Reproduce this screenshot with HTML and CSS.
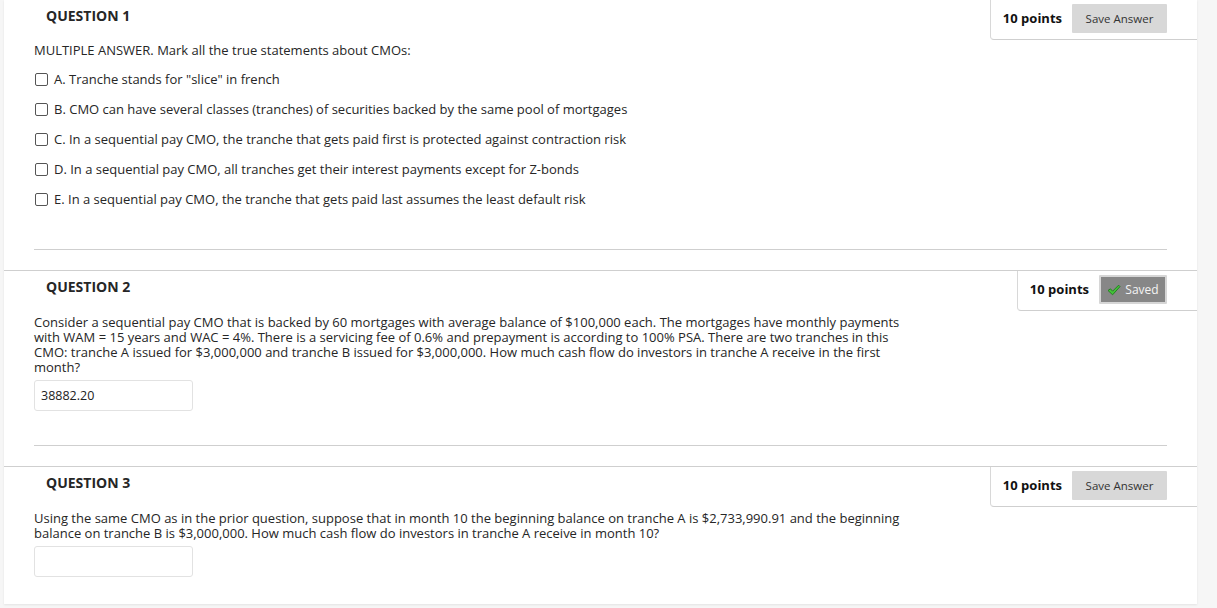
FILE: index.html
```html
<!DOCTYPE html>
<html>
<head>
<meta charset="utf-8">
<link rel="stylesheet" href="styles.css">
</head>
<body>
<div class="panel">
  <section class="q q-first">
    <div class="q-head">
      <h3 class="q-title">QUESTION 1</h3>
      <div class="points">
        <span class="pts">10 points</span>
        <button class="btn">Save Answer</button>
      </div>
    </div>
    <div class="q-body">
      <p class="q-text">MULTIPLE ANSWER. Mark all the true statements about CMOs:</p>
      <ul class="opts">
        <li><span class="cb"></span>A. Tranche stands for "slice" in french</li>
        <li><span class="cb"></span>B. CMO can have several classes (tranches) of securities backed by the same pool of mortgages</li>
        <li><span class="cb"></span>C. In a sequential pay CMO, the tranche that gets paid first is protected against contraction risk</li>
        <li><span class="cb"></span>D. In a sequential pay CMO, all tranches get their interest payments except for Z-bonds</li>
        <li><span class="cb"></span>E. In a sequential pay CMO, the tranche that gets paid last assumes the least default risk</li>
      </ul>
      <hr class="sep sep-1">
    </div>
  </section>
  <section class="q">
    <div class="q-head">
      <h3 class="q-title">QUESTION 2</h3>
      <div class="points">
        <span class="pts">10 points</span>
        <button class="btn btn-saved"><svg class="check" viewBox="0 0 14 12" width="14" height="12"><path d="M1 6.5 L3.5 4.8 L5.6 7.2 L11.6 1.2 L13 2.6 L5.6 10.8 Z" fill="#44c23a" stroke="#1f7a1c" stroke-width="0.9" stroke-linejoin="round"/></svg>Saved</button>
      </div>
    </div>
    <div class="q-body">
      <p class="q-para">Consider a sequential pay CMO that is backed by 60 mortgages with average balance of $100,000 each. The mortgages have monthly payments with WAM = 15 years and WAC = 4%. There is a servicing fee of 0.6% and prepayment is according to 100% PSA. There are two tranches in this CMO: tranche A issued for $3,000,000 and tranche B issued for $3,000,000. How much cash flow do investors in tranche A receive in the first month?</p>
      <div class="answer">38882.20</div>
      <hr class="sep sep-2">
    </div>
  </section>
  <section class="q q-last">
    <div class="q-head">
      <h3 class="q-title">QUESTION 3</h3>
      <div class="points">
        <span class="pts">10 points</span>
        <button class="btn">Save Answer</button>
      </div>
    </div>
    <div class="q-body">
      <p class="q-para">Using the same CMO as in the prior question, suppose that in month 10 the beginning balance on tranche A is $2,733,990.91 and the beginning balance on tranche B is $3,000,000. How much cash flow do investors in tranche A receive in month 10?</p>
      <div class="answer"></div>
    </div>
  </section>
</div>
</body>
</html>
```
FILE: styles.css
```css
html, body {
  margin: 0;
  padding: 0;
  background: #f6f6f6;
  height: 100%;
  overflow: hidden;
}
body {
  font-family: "Open Sans", "Liberation Sans", sans-serif;
  font-size: 13px;
  color: #262626;
}
.panel {
  margin-left: 4px;
  width: 1193px;
  height: 604px;
  background: #fff;
  box-shadow: 0 1px 2px rgba(0,0,0,0.08);
  overflow: hidden;
}
.q {
  border-top: 1px solid #cfcfcf;
}
.q-first {
  margin-top: -1px;
}
.q-head {
  display: flex;
  justify-content: space-between;
  align-items: flex-start;
}
.q-title {
  margin: 0;
  padding: 6px 0 0 42px;
  font-size: 14px;
  line-height: 20px;
  font-weight: 700;
  color: #262626;
}
.points {
  display: flex;
  align-items: center;
  padding: 4px 30px 6px 12px;
  border-left: 1px solid #d8d8d8;
  border-bottom: 1px solid #cfcfcf;
  border-bottom-left-radius: 4px;
  height: 29px;
}
.pts {
  font-weight: 700;
  font-size: 13px;
  color: #111;
  margin-right: 10px;
  padding-bottom: 2px;
}
.btn {
  font-family: "Open Sans", "Liberation Sans", sans-serif;
  font-size: 11.5px;
  color: #333;
  background: #d8d8d8;
  border: none;
  border-radius: 1px;
  height: 29px;
  width: 95px;
  padding: 0;
  display: flex;
  align-items: center;
  justify-content: center;
}
.btn-saved {
  width: 68px;
  height: 29px;
  background: #878787;
  border: 2px solid #d6d6d6;
  color: #f4f4f4;
  font-size: 12px;
  gap: 4px;
}
.check {
  display: block;
}
.q-body {
  padding: 0 30px;
}
.q-text {
  margin: 1px 0 11px;
  line-height: 18px;
}
.opts {
  list-style: none;
  margin: 0;
  padding: 0;
}
.opts li {
  display: flex;
  align-items: center;
  line-height: 18px;
  margin-bottom: 12px;
}
.cb {
  width: 11px;
  height: 11px;
  border: 1px solid #555;
  border-radius: 2px;
  margin: 0 6px 0 1px;
  flex: none;
}
.sep {
  border: none;
  border-top: 1px solid #cfcfcf;
  margin: 0;
}
.sep-1 {
  margin-top: 41px;
  margin-bottom: 20px;
}
.sep-2 {
  margin-top: 34px;
  margin-bottom: 20px;
}
.q-para {
  margin: 4px 0 5px;
  line-height: 15px;
  max-width: 870px;
}
.answer {
  box-sizing: border-box;
  width: 159px;
  height: 31px;
  border: 1px solid #e2e2e2;
  border-radius: 3px;
  padding: 0 6px;
  line-height: 29px;
  font-size: 12.5px;
  color: #222;
}
```
